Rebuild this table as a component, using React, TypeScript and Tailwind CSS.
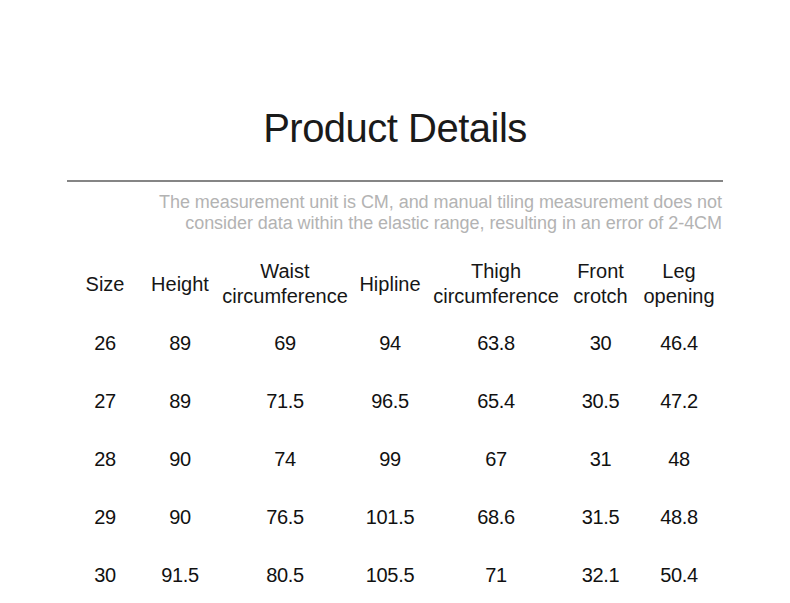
import React from "react";

const headers: string[][] = [
  ["Size"],
  ["Height"],
  ["Waist", "circumference"],
  ["Hipline"],
  ["Thigh", "circumference"],
  ["Front", "crotch"],
  ["Leg", "opening"],
];

const rows: string[][] = [
  ["26", "89", "69", "94", "63.8", "30", "46.4"],
  ["27", "89", "71.5", "96.5", "65.4", "30.5", "47.2"],
  ["28", "90", "74", "99", "67", "31", "48"],
  ["29", "90", "76.5", "101.5", "68.6", "31.5", "48.8"],
  ["30", "91.5", "80.5", "105.5", "71", "32.1", "50.4"],
];

const gridCols = "grid grid-cols-[76px_74px_136px_74px_138px_71px_86px]";

export default function App() {
  return (
    <div
      className="w-[790px] h-[603px] overflow-hidden bg-white text-[#1c1c1c]"
      style={{ fontFamily: '"Liberation Sans", Arial, sans-serif' }}
    >
      <div className="pt-[108px] px-[67px] flex flex-col">
        <h1 className="text-center text-[40px] leading-[40px] tracking-[-0.5px] text-[#1a1a1a] font-normal">
          Product Details
        </h1>
        <div className="mt-[32px] h-[2px] bg-[#858585]" />
        <p className="mt-[10px] text-right text-[18px] leading-[21px] tracking-[-0.05px] text-[#b3b3b3] pr-[1px]">
          The measurement unit is CM, and manual tiling measurement does not
          <br />
          consider data within the elastic range, resulting in an error of 2-4CM
        </p>
        <div className={`${gridCols} mt-[20px] h-[60px] items-center text-[20px] leading-[25px] text-[#161616]`}>
          {headers.map((h, i) => (
            <div key={i} className="flex flex-col items-center text-center whitespace-nowrap">
              {h.map((l, j) => (
                <span key={j}>{l}</span>
              ))}
            </div>
          ))}
        </div>
        {rows.map((r, i) => (
          <div key={i} className={`${gridCols} h-[58px] items-center text-[20px] leading-[25px] text-[#111111]`}>
            {r.map((c, j) => (
              <div key={j} className="flex justify-center whitespace-nowrap tracking-[-0.3px]">
                {c}
              </div>
            ))}
          </div>
        ))}
      </div>
    </div>
  );
}
